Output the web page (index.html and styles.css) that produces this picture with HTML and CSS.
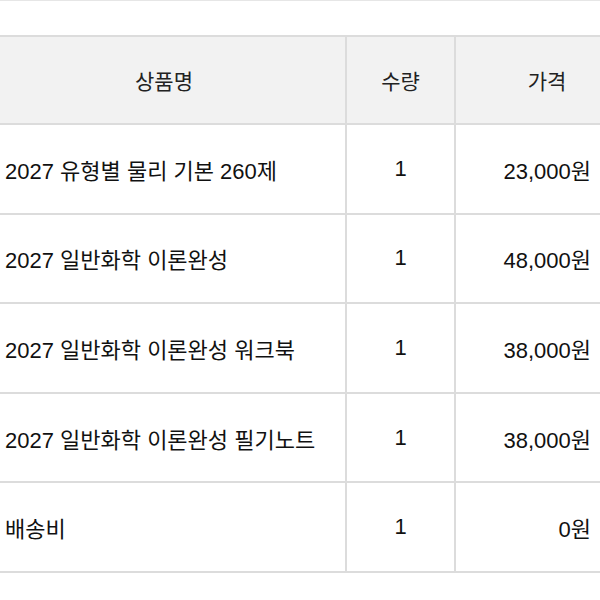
FILE: index.html
```html
<!DOCTYPE html>
<html lang="ko">
<head>
<meta charset="utf-8">
<link rel="stylesheet" href="styles.css">
</head>
<body>
<div class="topline"></div>
<table class="order">
  <colgroup>
    <col class="c-name">
    <col class="c-qty">
    <col class="c-price">
  </colgroup>
  <thead>
    <tr>
      <th>상품명</th>
      <th>수량</th>
      <th>가격</th>
    </tr>
  </thead>
  <tbody>
    <tr><td class="name">2027 유형별 물리 기본 260제</td><td class="qty">1</td><td class="price">23,000원</td></tr>
    <tr><td class="name">2027 일반화학 이론완성</td><td class="qty">1</td><td class="price">48,000원</td></tr>
    <tr><td class="name">2027 일반화학 이론완성 워크북</td><td class="qty">1</td><td class="price">38,000원</td></tr>
    <tr><td class="name">2027 일반화학 이론완성 필기노트</td><td class="qty">1</td><td class="price">38,000원</td></tr>
    <tr><td class="name">배송비</td><td class="qty">1</td><td class="price">0원</td></tr>
  </tbody>
</table>
</body>
</html>
```

FILE: styles.css
```css
html, body {
  margin: 0;
  padding: 0;
  background: #ffffff;
  overflow: hidden;
}
body {
  width: 600px;
  height: 600px;
  font-family: "Liberation Sans", "Noto Sans CJK KR", sans-serif;
  color: #111111;
}
.topline {
  height: 1px;
  background: #e6e6e6;
  margin-bottom: 34px;
}
.order {
  border-collapse: collapse;
  table-layout: fixed;
  width: 657px;
  margin-left: -19px;
}
.c-name { width: 364px; }
.c-qty { width: 109px; }
.c-price { width: 184px; }
.order th,
.order td {
  border: 2px solid #dcdcdc;
  padding: 0;
  vertical-align: middle;
  box-sizing: border-box;
}
.order th {
  height: 88px;
  background: #f2f2f2;
  font-family: "Noto Sans CJK KR", sans-serif;
  font-weight: 400;
  font-size: 21px;
  color: #222222;
  text-align: center;
}
.order td {
  height: 89.6px;
  font-size: 22px;
}
.order td.name {
  padding-left: 22px;
  text-align: left;
}
.order td.qty {
  text-align: center;
}
.order td.price {
  text-align: right;
  padding-right: 47px;
}
```
